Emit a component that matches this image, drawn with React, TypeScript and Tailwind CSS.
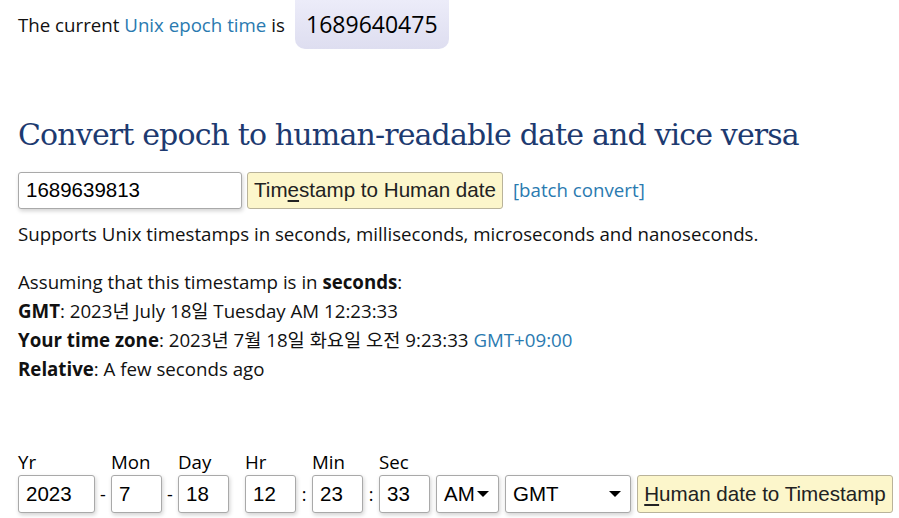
const body = { fontFamily: '"Open Sans", "Noto Sans CJK KR", sans-serif' };

const boxBase =
  "shrink-0 h-[38px] flex items-center border border-[#a9a9a9] rounded-[3px] bg-white shadow-[1px_2px_4px_rgba(0,0,0,0.18)] text-[20.5px] text-black font-['Liberation_Sans',Arial,sans-serif]";

const btn =
  "shrink-0 border border-[#b9b39a] rounded-[3px] bg-[#fcf6cb] text-[20.6px] text-[#222] font-['Liberation_Sans',Arial,sans-serif]";

function Field({ label, value, w }: { label: string; value: string; w: string }) {
  return (
    <div className="shrink-0 flex flex-col">
      <span className="text-[18.7px] leading-[26px] text-black">{label}</span>
      <div className={`${boxBase} ${w} px-[7px]`}>{value}</div>
    </div>
  );
}

function Sep({ ch }: { ch: string }) {
  return <span className="shrink-0 w-[16px] h-[38px] flex items-center justify-center text-[18px] text-black">{ch}</span>;
}

function Caret() {
  return <span className="w-0 h-0 border-l-[6px] border-r-[6px] border-t-[6px] border-l-transparent border-r-transparent border-t-black" />;
}

export default function App() {
  return (
    <div className="w-[899px] h-[518px] overflow-hidden bg-white px-[18px]" style={body}>
      {/* current time */}
      <div className="flex items-start">
        <p className="pt-[12px] text-[18.7px] leading-[26px] text-[#111]">
          The current <span className="text-[#2a7ab0]">Unix epoch time</span> is
        </p>
        <div className="ml-[10px] w-[154px] h-[49px] rounded-b-[10px] bg-gradient-to-b from-[#ececf9] to-[#dedef0] flex items-center justify-center text-[23px] text-black">
          1689640475
        </div>
      </div>

      <h1 className="mt-[66px] text-[30px] leading-[40px] text-[#1d3a70] font-['DejaVu_Serif',serif] tracking-[-0.85px]">
        Convert epoch to human-readable date and vice versa
      </h1>

      <div className="mt-[17px] flex items-center">
        <div className={`${boxBase} w-[224px] !h-[37px] px-[7px]`}>1689639813</div>
        <button className={`${btn} ml-[5px] w-[256px] h-[37px]`}>
          Tim<span className="underline underline-offset-[3px]">e</span>stamp to Human date
        </button>
        <span className="ml-[10px] text-[18.7px] text-[#2a7ab0]">[batch convert]</span>
      </div>

      <p className="mt-[10px] text-[18.7px] leading-[29px] text-[#111]">
        Supports Unix timestamps in seconds, milliseconds, microseconds and nanoseconds.
      </p>

      <div className="mt-[19px] text-[18.7px] leading-[29px] text-[#111]">
        <p>
          Assuming that this timestamp is in <b>seconds</b>:
        </p>
        <p>
          <b>GMT</b>: 2023년 July 18일 Tuesday AM 12:23:33
        </p>
        <p>
          <b>Your time zone</b>: 2023년 7월 18일 화요일 오전 9:23:33{' '}
          <span className="text-[#2a7ab0]">GMT+09:00</span>
        </p>
        <p>
          <b>Relative</b>: A few seconds ago
        </p>
      </div>

      <div className="mt-[66px] flex items-end w-max">
        <Field label="Yr" value="2023" w="w-[77px]" />
        <Sep ch="-" />
        <Field label="Mon" value="7" w="w-[51px]" />
        <Sep ch="-" />
        <Field label="Day" value="18" w="w-[51px]" />
        <Sep ch="" />
        <Field label="Hr" value="12" w="w-[51px]" />
        <Sep ch=":" />
        <Field label="Min" value="23" w="w-[51px]" />
        <Sep ch=":" />
        <Field label="Sec" value="33" w="w-[51px]" />
        <div className={`${boxBase} ml-[6px] w-[63px] pl-[7px] gap-[2px]`}>
          AM
          <Caret />
        </div>
        <div className={`${boxBase} ml-[6px] w-[126px] justify-between px-[7px]`}>
          GMT
          <span className="mr-[2px] flex">
            <Caret />
          </span>
        </div>
        <button className={`${btn} ml-[6px] w-[256px] h-[38px]`}>
          <span className="underline underline-offset-[3px]">H</span>uman date to Timestamp
        </button>
      </div>
    </div>
  );
}
